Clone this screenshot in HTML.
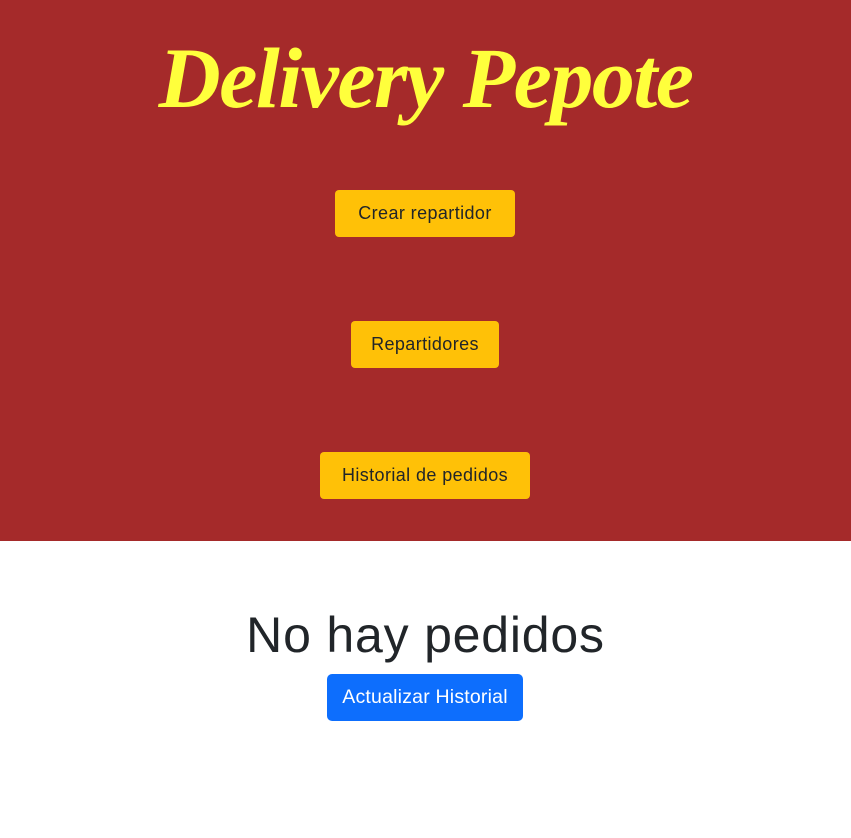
<!DOCTYPE html>
<html><head><meta charset="utf-8"><style>
body{margin:0;width:851px;height:838px;background:#fff;position:relative;font-family:"Liberation Sans",sans-serif;overflow:hidden}
.hdr{position:absolute;left:0;top:0;width:851px;height:541px;background:#a52a2a}
.t{position:absolute;left:0;width:851px;top:28px;text-align:center;color:#ffff3c;font-family:"Liberation Serif",serif;font-style:italic;font-weight:bold;font-size:86px;letter-spacing:-1.5px}
.b{position:absolute;height:47px;line-height:47px;background:#ffc107;border-radius:4px;text-align:center;color:#212529;font-size:18px;letter-spacing:0.4px;box-sizing:border-box}
.h{position:absolute;left:0;width:851px;top:606px;text-align:center;color:#212529;font-size:50px;font-weight:300;letter-spacing:0.8px}
.a{position:absolute;left:327px;top:674px;width:196px;height:47px;line-height:47px;background:#0d6efd;color:#fff;border-radius:5px;text-align:center;font-size:19.5px;letter-spacing:0.2px}
</style></head><body>
<div class="hdr"></div>
<div class="t">Delivery Pepote</div>
<div class="b" style="left:335px;top:190px;width:180px">Crear repartidor</div>
<div class="b" style="left:351px;top:321px;width:148px">Repartidores</div>
<div class="b" style="left:320px;top:452px;width:210px">Historial de pedidos</div>
<div class="h">No hay pedidos</div>
<div class="a">Actualizar Historial</div>
</body></html>
